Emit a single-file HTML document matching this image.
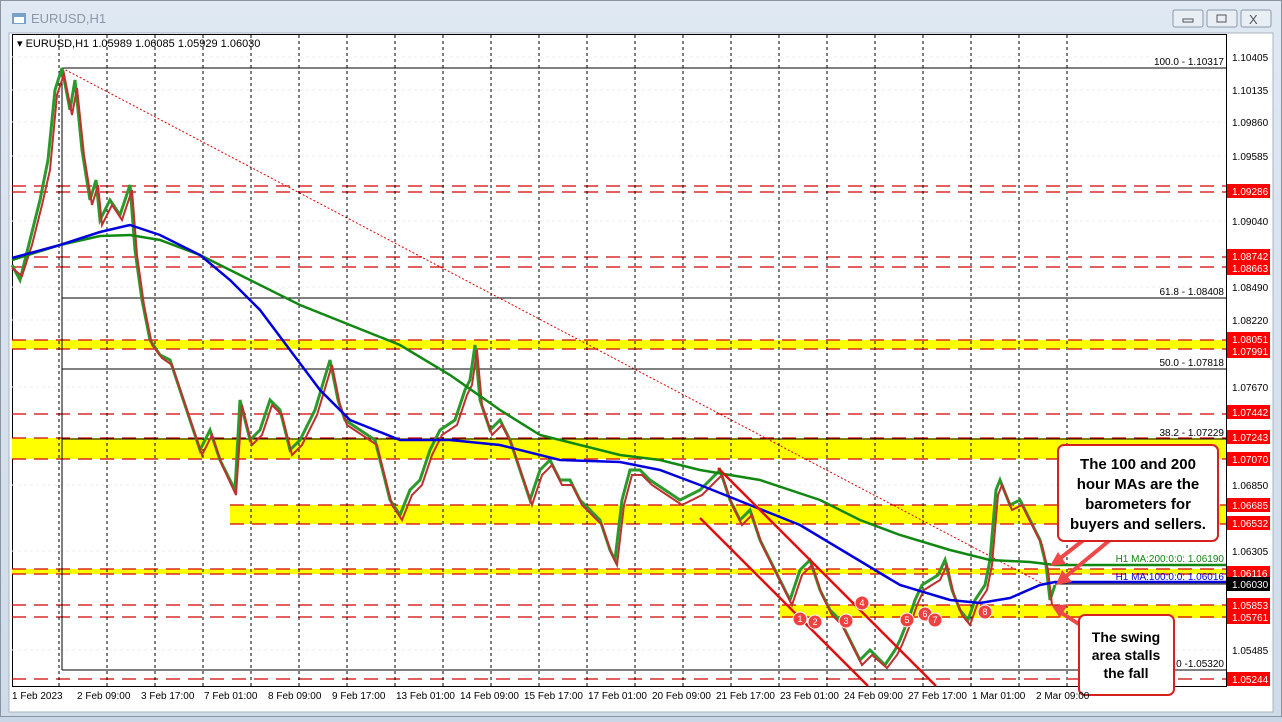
<!DOCTYPE html>
<html><head><meta charset="utf-8"><style>
body{margin:0;width:1282px;height:717px;overflow:hidden;background:#c9d6e5;font-family:"Liberation Sans",sans-serif}
</style></head><body>
<svg width="1282" height="717" xmlns="http://www.w3.org/2000/svg" font-family="Liberation Sans, sans-serif">
<defs><linearGradient id="tb" x1="0" y1="0" x2="0" y2="1"><stop offset="0" stop-color="#dfe8f3"/><stop offset="1" stop-color="#cfdbe9"/></linearGradient></defs>
<rect x="0" y="0" width="1282" height="717" fill="url(#tb)"/>
<rect x="0.5" y="0.5" width="1281" height="716" fill="none" stroke="#8a94a0"/>
<rect x="12" y="13" width="14" height="11" fill="#7aa0c8"/><rect x="14" y="17" width="10" height="6" fill="#fff"/>
<text x="31" y="23" font-size="13" fill="#8b97a5">EURUSD,H1</text>
<g fill="#e9eef5" stroke="#8c99aa"><rect x="1173" y="10" width="30" height="17" rx="2"/><rect x="1207" y="10" width="30" height="17" rx="2"/><rect x="1241" y="10" width="30" height="17" rx="2"/></g>
<rect x="1183" y="19" width="10" height="3" fill="none" stroke="#555"/><rect x="1217" y="15" width="9" height="7" fill="none" stroke="#555"/>
<text x="1249" y="24" font-size="13" fill="#555">X</text>
<rect x="9" y="33" width="1264" height="679" fill="#fff" stroke="#aab4c0"/>
<text x="17" y="47" font-size="11" fill="#000">▾ EURUSD,H1  1.05989 1.06085 1.05929 1.06030</text>
<rect x="12.5" y="34.5" width="1214" height="652" fill="none" stroke="#000"/>
<g stroke="#eee" stroke-dasharray="3,3">
<line x1="12" y1="57" x2="1226" y2="57"/><line x1="12" y1="90" x2="1226" y2="90"/><line x1="12" y1="122" x2="1226" y2="122"/><line x1="12" y1="156" x2="1226" y2="156"/><line x1="12" y1="221" x2="1226" y2="221"/><line x1="12" y1="287" x2="1226" y2="287"/><line x1="12" y1="320" x2="1226" y2="320"/><line x1="12" y1="387" x2="1226" y2="387"/><line x1="12" y1="485" x2="1226" y2="485"/><line x1="12" y1="551" x2="1226" y2="551"/><line x1="12" y1="650" x2="1226" y2="650"/>
</g>
<g fill="#ffff00"><rect x="12" y="340" width="1214" height="9"/><rect x="12" y="438" width="1214" height="21"/><rect x="230" y="505" width="996" height="19"/><rect x="12" y="569" width="1214" height="5"/><rect x="780" y="605" width="446" height="13"/></g>
<g stroke="#d00000" stroke-width="1.3" stroke-dasharray="14,8">
<line x1="12" y1="186" x2="1226" y2="186"/><line x1="12" y1="192" x2="1226" y2="192"/><line x1="12" y1="257" x2="1226" y2="257"/><line x1="12" y1="267" x2="1226" y2="267"/><line x1="12" y1="340" x2="1226" y2="340"/><line x1="12" y1="349" x2="1226" y2="349"/><line x1="12" y1="414" x2="1226" y2="414"/><line x1="12" y1="438" x2="1226" y2="438"/><line x1="12" y1="459" x2="1226" y2="459"/><line x1="230" y1="505" x2="1226" y2="505"/><line x1="230" y1="524" x2="1226" y2="524"/><line x1="12" y1="569" x2="1226" y2="569"/><line x1="12" y1="574" x2="1226" y2="574"/><line x1="12" y1="605" x2="1226" y2="605"/><line x1="12" y1="617" x2="1226" y2="617"/><line x1="12" y1="679" x2="1226" y2="679"/>
</g>
<g stroke="#000"><line x1="62" y1="68" x2="1226" y2="68"/><line x1="62" y1="298" x2="1226" y2="298"/><line x1="62" y1="369" x2="1226" y2="369"/><line x1="62" y1="439" x2="1226" y2="439"/><line x1="62" y1="670" x2="1226" y2="670"/><line x1="62" y1="68" x2="62" y2="670"/></g>
<g font-size="10" fill="#000" text-anchor="end"><text x="1224" y="65">100.0 - 1.10317</text><text x="1224" y="295">61.8 - 1.08408</text><text x="1224" y="366">50.0 - 1.07818</text><text x="1224" y="436">38.2 - 1.07229</text><text x="1224" y="667">0.0 -1.05320</text></g>
<line x1="62" y1="68" x2="1045" y2="585" stroke="#d00" stroke-dasharray="2,2"/>
<g stroke="#000" stroke-dasharray="3,3">
<line x1="59" y1="35" x2="59" y2="686"/><line x1="107" y1="35" x2="107" y2="686"/><line x1="155" y1="35" x2="155" y2="686"/><line x1="203" y1="35" x2="203" y2="686"/><line x1="251" y1="35" x2="251" y2="686"/><line x1="299" y1="35" x2="299" y2="686"/><line x1="347" y1="35" x2="347" y2="686"/><line x1="395" y1="35" x2="395" y2="686"/><line x1="443" y1="35" x2="443" y2="686"/><line x1="491" y1="35" x2="491" y2="686"/><line x1="539" y1="35" x2="539" y2="686"/><line x1="587" y1="35" x2="587" y2="686"/><line x1="635" y1="35" x2="635" y2="686"/><line x1="683" y1="35" x2="683" y2="686"/><line x1="731" y1="35" x2="731" y2="686"/><line x1="779" y1="35" x2="779" y2="686"/><line x1="827" y1="35" x2="827" y2="686"/><line x1="875" y1="35" x2="875" y2="686"/><line x1="923" y1="35" x2="923" y2="686"/><line x1="971" y1="35" x2="971" y2="686"/><line x1="1019" y1="35" x2="1019" y2="686"/><line x1="1067" y1="35" x2="1067" y2="686"/>
</g>
<polyline fill="none" stroke="#2a9a2a" stroke-width="3" points="12,265 20,280 30,240 40,200 48,160 55,90 62,68 70,110 75,80 82,150 90,200 96,180 100,220 110,200 120,215 130,185 135,250 142,300 150,340 160,355 170,360 180,390 190,420 200,450 210,430 220,460 235,490 240,400 250,440 260,430 270,400 280,410 290,450 300,440 315,410 330,360 338,400 345,420 360,430 375,440 385,480 390,500 400,515 410,490 420,480 430,450 440,430 455,420 465,390 470,380 475,345 480,400 490,430 500,420 510,440 520,470 530,500 540,470 550,460 560,480 570,480 580,500 590,510 600,520 610,550 615,560 622,500 630,470 640,470 650,480 665,490 680,500 700,490 720,470 730,500 740,520 750,510 760,540 770,560 780,580 790,600 800,570 810,560 820,590 830,610 840,620 850,640 860,660 870,650 885,665 895,650 900,640 910,615 915,600 922,585 930,580 938,575 945,560 952,590 960,610 968,620 975,600 985,585 990,560 996,490 1000,480 1010,505 1020,500 1030,520 1040,540 1046,565 1050,600 1055,585"/>
<polyline fill="none" stroke="#c03030" stroke-width="2" points="12,268 22,276 32,245 42,205 50,170 57,95 64,74 72,115 77,88 84,155 92,205 98,185 102,225 112,205 122,220 132,190 137,255 144,305 152,345 162,358 172,365 182,395 192,425 202,455 212,435 222,465 236,495 242,405 252,445 262,435 272,405 282,415 292,455 302,445 317,415 332,365 340,405 347,425 362,435 377,445 387,485 392,505 402,520 412,495 422,485 432,455 442,435 457,425 467,395 472,385 477,350 482,405 492,435 502,425 512,445 522,475 532,505 542,475 552,465 562,485 572,485 582,505 592,515 602,525 612,555 617,565 624,505 632,475 642,475 652,485 667,495 682,505 702,495 722,475 732,505 742,525 752,515 762,545 772,565 782,585 792,605 802,575 812,565 822,595 832,615 842,625 852,645 862,665 872,655 887,668 897,655 902,645 912,620 917,605 924,590 932,585 940,580 947,565 954,595 962,615 970,625 977,605 987,590 992,565 998,495 1002,485 1012,510 1022,505 1032,525 1042,545 1048,570 1052,605"/>
<polyline fill="none" stroke="#118811" stroke-width="2.5" points="12,260 60,245 100,236 130,235 160,240 200,255 250,280 300,305 350,325 400,345 450,375 500,410 540,435 580,445 620,455 660,460 700,470 760,480 820,500 860,520 900,535 950,550 990,560 1030,562 1055,565 1226,565"/>
<polyline fill="none" stroke="#0000dd" stroke-width="2.5" points="12,258 60,245 100,232 130,225 160,235 200,255 230,280 260,310 290,350 320,390 350,420 400,440 450,440 500,445 560,460 620,462 660,470 700,485 750,505 800,525 850,555 900,585 950,600 980,603 1010,598 1040,585 1055,582 1226,582"/>
<g font-size="10" text-anchor="end"><text x="1224" y="562" fill="#118811">H1 MA:200:0:0: 1.06190</text><text x="1224" y="580" fill="#0000dd">H1 MA:100:0:0: 1.06016</text></g>
<line x1="1055" y1="584" x2="1226" y2="584" stroke="#000"/>
<g stroke="#e01010" stroke-width="2.5"><line x1="718" y1="468" x2="936" y2="686"/><line x1="700" y1="518" x2="868" y2="686"/></g>
<g fill="#f04040" stroke="#fff"><circle cx="800" cy="619" r="7"/><circle cx="815" cy="622" r="7"/><circle cx="846" cy="621" r="7"/><circle cx="862" cy="603" r="7"/><circle cx="907" cy="620" r="7"/><circle cx="925" cy="614" r="7"/><circle cx="935" cy="620" r="7"/><circle cx="985" cy="612" r="7"/></g>
<g font-size="9" fill="#fff" text-anchor="middle"><text x="800" y="622">1</text><text x="815" y="625">2</text><text x="846" y="624">3</text><text x="862" y="606">4</text><text x="907" y="623">5</text><text x="925" y="617">6</text><text x="935" y="623">7</text><text x="985" y="615">8</text></g>
<g stroke="#f04848" stroke-width="4" fill="#f04848">
<line x1="1090" y1="535" x2="1058" y2="560"/><polygon points="1050,566 1066,564 1058,552" stroke="none"/>
<line x1="1110" y1="540" x2="1064" y2="578"/><polygon points="1056,585 1072,582 1062,570" stroke="none"/>
<line x1="1085" y1="628" x2="1060" y2="612"/><polygon points="1052,606 1068,604 1060,618" stroke="none"/>
</g>
<rect x="1058" y="445" width="160" height="96" rx="6" fill="#fff" stroke="#d82020" stroke-width="2"/>
<g font-size="15" font-weight="bold" text-anchor="middle" fill="#000"><text x="1138" y="469">The 100 and 200</text><text x="1138" y="489">hour MAs are the</text><text x="1138" y="509">barometers for</text><text x="1138" y="529">buyers and sellers.</text></g>
<rect x="1079" y="615" width="95" height="80" rx="6" fill="#fff" stroke="#d82020" stroke-width="2"/>
<g font-size="14" font-weight="bold" text-anchor="middle" fill="#000"><text x="1126" y="642">The swing</text><text x="1126" y="660">area stalls</text><text x="1126" y="678">the fall</text></g>
<g font-size="10" fill="#000"><text x="12" y="699">1 Feb 2023</text><text x="77" y="699">2 Feb 09:00</text><text x="141" y="699">3 Feb 17:00</text><text x="204" y="699">7 Feb 01:00</text><text x="268" y="699">8 Feb 09:00</text><text x="332" y="699">9 Feb 17:00</text><text x="396" y="699">13 Feb 01:00</text><text x="460" y="699">14 Feb 09:00</text><text x="524" y="699">15 Feb 17:00</text><text x="588" y="699">17 Feb 01:00</text><text x="652" y="699">20 Feb 09:00</text><text x="716" y="699">21 Feb 17:00</text><text x="780" y="699">23 Feb 01:00</text><text x="844" y="699">24 Feb 09:00</text><text x="908" y="699">27 Feb 17:00</text><text x="972" y="699">1 Mar 01:00</text><text x="1036" y="699">2 Mar 09:00</text></g>
<g font-size="10" fill="#000"><text x="1232" y="61">1.10405</text><text x="1232" y="94">1.10135</text><text x="1232" y="126">1.09860</text><text x="1232" y="160">1.09585</text><text x="1232" y="225">1.09040</text><text x="1232" y="291">1.08490</text><text x="1232" y="324">1.08220</text><text x="1232" y="357">1.07945</text><text x="1232" y="391">1.07670</text><text x="1232" y="489">1.06850</text><text x="1232" y="555">1.06305</text><text x="1232" y="654">1.05485</text></g>
<g fill="#ff0000"><rect x="1227" y="184" width="43" height="14"/><rect x="1227" y="249" width="43" height="14"/><rect x="1227" y="261" width="43" height="14"/><rect x="1227" y="332" width="43" height="14"/><rect x="1227" y="344" width="43" height="14"/><rect x="1227" y="405" width="43" height="14"/><rect x="1227" y="430" width="43" height="14"/><rect x="1227" y="452" width="43" height="14"/><rect x="1227" y="498" width="43" height="14"/><rect x="1227" y="516" width="43" height="14"/><rect x="1227" y="566" width="43" height="14"/><rect x="1227" y="598" width="43" height="14"/><rect x="1227" y="610" width="43" height="14"/><rect x="1227" y="672" width="43" height="14"/></g>
<rect x="1227" y="577" width="43" height="14" fill="#000"/>
<g font-size="10" fill="#fff"><text x="1232" y="195">1.09286</text><text x="1232" y="260">1.08742</text><text x="1232" y="272">1.08663</text><text x="1232" y="343">1.08051</text><text x="1232" y="355">1.07991</text><text x="1232" y="416">1.07442</text><text x="1232" y="441">1.07243</text><text x="1232" y="463">1.07070</text><text x="1232" y="509">1.06685</text><text x="1232" y="527">1.06532</text><text x="1232" y="577">1.06116</text><text x="1232" y="588">1.06030</text><text x="1232" y="609">1.05853</text><text x="1232" y="621">1.05761</text><text x="1232" y="683">1.05244</text></g>
</svg>
</body></html>
